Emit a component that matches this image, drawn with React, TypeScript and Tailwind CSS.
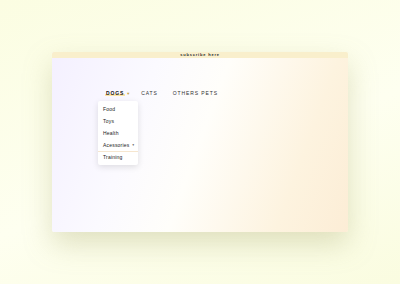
import { useState } from "react"

const items = ["Food", "Toys", "Health", "Acessories", "Training"]

export default function App() {
    const [open] = useState(true)

    return (
        <div className="w-[400px] h-[284px] overflow-hidden bg-[linear-gradient(160deg,#fbfde2_0%,#fefff0_55%,#fafce0_100%)] pt-[52px] px-[52px]" style={{ fontFamily: '"Liberation Sans", Arial, sans-serif' }}>
            <div className="h-[180px] rounded-[2px] overflow-hidden bg-[linear-gradient(110deg,#f4f0ff_0%,#fbfaff_30%,#fffefa_50%,#fdf3df_80%,#fcedd6_100%)] shadow-[0_12px_28px_rgba(170,170,110,0.35)] flex flex-col">
                <div className="h-[6px] bg-[#f9efcc] flex items-center justify-center">
                    <span className="text-[4px] leading-none tracking-[0.8px] text-[#2a2a2a] font-bold">subscribe here</span>
                </div>

                <nav className="mt-[33px] ml-[53px] flex items-center text-[5px] leading-none tracking-[0.9px] text-[#333]">
                    <div className="relative">
                        <div className="flex items-center gap-[1px]">
                            <span className="font-bold text-[#111] bg-[linear-gradient(to_top,#fbe3a6_0%,#fbe3a6_40%,transparent_40%)] px-[1px]">DOGS</span>
                            <span className="text-[4px] text-[#c9a341]">▼</span>
                        </div>
                        {open && (
                            <div className="absolute left-[-7px] top-[10px] w-[40px] bg-white rounded-[2px] shadow-[0_2px_6px_rgba(0,0,0,0.12)] py-[2px] tracking-[0.2px] text-[#222]">
                                {items.map((item, i) => (
                                    <div key={item} className={`h-[12px] flex items-center justify-between pl-[5px] pr-[3px] ${i === 4 ? "border-t border-[#f6e6cf]" : ""}`}>
                                        <span>{item}</span>
                                        {item === "Acessories" && <span className="text-[3px] text-[#555]">▼</span>}
                                    </div>
                                ))}
                            </div>
                        )}
                    </div>
                    <span className="ml-[10px]">CATS</span>
                    <span className="ml-[15px]">OTHERS PETS</span>
                </nav>
            </div>
        </div>
    )
}
